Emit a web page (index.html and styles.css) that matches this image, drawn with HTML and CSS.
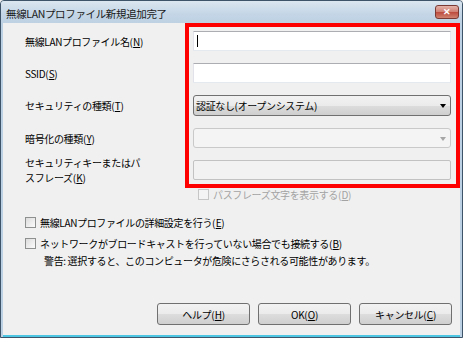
FILE: index.html
```html
<html>
	<head>
		<title>無線LANプロファイル新規追加完了</title>
		<link rel="stylesheet" href="styles.css">
	</head>
	<body>
		<div id="window">
			<div id="titlebar">
				<span id="title">無線LANプロファイル新規追加完了</span>
				<div id="close">&#x2715;</div>
			</div>
			<div id="content">
				<div id="form">
					<div class="label">無線LANプロファイル名(<u>N</u>)</div>
					<div class="field text"><span class="caret"></span></div>
					<div class="label">SSID(<u>S</u>)</div>
					<div class="field text"></div>
					<div class="label">セキュリティの種類(<u>T</u>)</div>
					<div class="field select"><span>認証なし(オープンシステム)</span><span class="arrow"></span></div>
					<div class="label">暗号化の種類(<u>Y</u>)</div>
					<div class="field select disabled"><span></span><span class="arrow"></span></div>
					<div class="label">セキュリティキーまたはパ<br>スフレーズ(<u>K</u>)</div>
					<div class="field text disabled"></div>
					<div></div>
					<div class="check off small"><span class="box"></span>パスフレーズ文字を表示する(<u>D</u>)</div>
				</div>
				<div class="check" id="detail"><span class="box"></span>無線LANプロファイルの詳細設定を行う(<u>E</u>)</div>
				<div class="check" id="hidden"><span class="box"></span>ネットワークがブロードキャストを行っていない場合でも接続する(<u>B</u>)</div>
				<div id="warning">警告: 選択すると、このコンピュータが危険にさらされる可能性があります。</div>
				<div id="buttons">
					<button>ヘルプ(<u>H</u>)</button>
					<button>OK(<u>O</u>)</button>
					<button>キャンセル(<u>C</u>)</button>
				</div>
			</div>
			<div id="mark"></div>
		</div>
	</body>
</html>
```

FILE: styles.css
```css
body{
	margin: 0;
	font-family: "Noto Sans CJK JP", "Noto Sans", sans-serif;
	font-size: 10px;
	letter-spacing: -0.35px;
	color: #000;
	background-color: #f0f0f0;
}
u{
	text-decoration: underline;
	padding-left: 0.5px;
}
#window{
	position: relative;
	width: 463px;
	height: 338px;
	box-sizing: border-box;
	border: 1px solid #3e5569;
	border-radius: 4px 4px 0 0;
	display: flex;
	flex-direction: column;
	background-color: #bcd2e4;
	overflow: hidden;
}
#titlebar{
	height: 22px;
	display: flex;
	align-items: center;
	justify-content: space-between;
	padding: 0 3px 0 5px;
	background: linear-gradient(#dbe6f0, #c4d6e6 60%, #bdd1e3);
	flex-shrink: 0;
}
#title{
	font-size: 10.5px;
	color: #1a1a1a;
	margin-top: 2px;
}
#close{
	width: 22px;
	height: 12px;
	margin-top: -1px;
	border: 1px solid #7a3a33;
	border-radius: 3px;
	background: linear-gradient(#e4b2a8, #cf7f72 50%, #bb4a3c 51%, #d08270);
	color: #fff;
	font-size: 9px;
	font-weight: bold;
	line-height: 12px;
	text-align: center;
	letter-spacing: 0;
}
#content{
	flex: 1;
	margin: 0 2px 0 2px;
	border-bottom: 2px solid #4cc6e2;
	background-color: #f0f0f0;
	display: flex;
	flex-direction: column;
	padding: 0 0 0 22px;
}
#form{
	display: grid;
	grid-template-columns: 168px 258px;
	grid-template-rows: 20px 20px 21px 20px 20px 14px;
	row-gap: 12px;
	padding-top: 8px;
}
#form > div:nth-last-child(2), #form > .check{
	margin-top: -5px;
}
.label{
	width: 124px;
	align-self: center;
	line-height: 15px;
}
.field{
	box-sizing: border-box;
	height: 100%;
	position: relative;
}
.text{
	background-color: #fff;
	border: 1px solid #e3e9ef;
	border-top-color: #abadb3;
	border-left-color: #e2e3ea;
	border-radius: 1px;
}
.caret{
	position: absolute;
	left: 3px;
	top: 3px;
	height: 12px;
	border-left: 1px solid #000;
}
.select{
	border: 1px solid #707070;
	border-radius: 3px;
	background: linear-gradient(#f2f2f2, #ebebeb 50%, #dddddd 51%, #cfcfcf);
	display: flex;
	align-items: center;
	justify-content: space-between;
	padding: 0 4px 0 2px;
}
.arrow{
	width: 0;
	height: 0;
	border-left: 3.5px solid transparent;
	border-right: 3.5px solid transparent;
	border-top: 4px solid #000;
	margin-top: 1px;
}
.select.disabled{
	border-color: #c9c9c9;
	background: #f4f4f4;
}
.select.disabled .arrow{
	border-top-color: #a6a6a6;
}
.text.disabled{
	background-color: #f2f2f2;
	border-color: #c2c2c2;
	border-radius: 2px;
}
.check{
	display: flex;
	align-items: center;
	height: 14px;
}
.box{
	width: 11px;
	height: 11px;
	box-sizing: border-box;
	border: 1px solid #8e8f8f;
	background: linear-gradient(135deg, #dcdcdc, #fbfbfb);
	margin-right: 4px;
	flex-shrink: 0;
}
.check.off{
	color: #a3a3a3;
	padding-left: 5px;
}
.check.off .box{
	border-color: #c6c6c6;
	background: #f4f4f4;
}
#detail{
	margin-top: 9px;
}
#hidden{
	margin-top: 7px;
}
#warning{
	margin-top: 4px;
	padding-left: 19px;
	height: 14px;
	line-height: 14px;
}
#buttons{
	margin-top: auto;
	margin-bottom: 10px;
	display: flex;
	justify-content: flex-end;
	gap: 8px;
	padding-right: 8px;
}
button{
	width: 93px;
	height: 22px;
	border: 1px solid #707070;
	border-radius: 3px;
	background: linear-gradient(#f2f2f2, #ebebeb 50%, #dddddd 51%, #cfcfcf);
	font-family: "Noto Sans CJK JP", "Noto Sans", sans-serif;
	font-size: 10px;
	letter-spacing: -0.35px;
	color: #000;
	padding: 0;
}
#mark{
	position: absolute;
	left: 184px;
	top: 22px;
	width: 275px;
	height: 165px;
	box-sizing: border-box;
	border: 4px solid #ff0000;
}
```
